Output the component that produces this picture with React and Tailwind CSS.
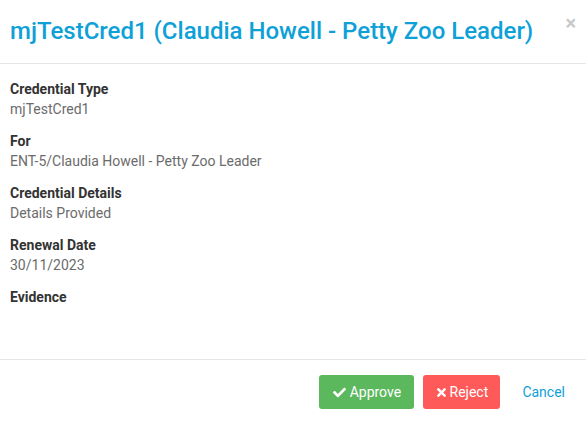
import { FaCheck, FaTimes } from 'react-icons/fa';

const fields = [
  { label: 'Credential Type', value: 'mjTestCred1' },
  { label: 'For', value: 'ENT-5/Claudia Howell - Petty Zoo Leader' },
  { label: 'Credential Details', value: 'Details Provided' },
  { label: 'Renewal Date', value: '30/11/2023' },
  { label: 'Evidence', value: '' },
];

const App = () => {
  return (
    <div className="w-[586px] h-[422px] bg-white font-['Roboto',sans-serif] flex flex-col overflow-hidden">
      {/* Header */}
      <div className="h-[64px] shrink-0 flex items-center justify-between pl-[10px] pr-[10px] border-b border-[#e5e5e5]">
        <h1 className="text-[24px] leading-none font-medium text-[#0ea1d8] -mt-[1px]">
          mjTestCred1 (Claudia Howell - Petty Zoo Leader)
        </h1>
        <button className="self-start mt-[13px] text-[#c8c8c8] text-[20px] leading-none font-bold">×</button>
      </div>

      {/* Body */}
      <div className="h-[295px] shrink-0 px-[10px] pt-[15px]">
        {fields.map((f) => (
          <div key={f.label} className="mb-[12px]">
            <div className="text-[14px] leading-[20px] font-bold text-[#333]">{f.label}</div>
            {f.value && <div className="text-[14px] leading-[20px] text-[#6b6b6b]">{f.value}</div>}
          </div>
        ))}
      </div>

      {/* Footer */}
      <div className="flex-1 border-t border-[#e5e5e5] flex items-start justify-end pt-[15px] pr-[9px]">
        <button className="h-[34px] w-[95px] flex items-center justify-center gap-[4px] bg-[#5cb85c] rounded-[3px] text-white text-[14px]">
          <FaCheck className="w-[13px] h-[13px]" />
          Approve
        </button>
        <button className="ml-[9px] h-[34px] w-[77px] flex items-center justify-center gap-[3px] bg-[#ff5a5a] rounded-[3px] text-white text-[14px]">
          <FaTimes className="w-[11px] h-[13px]" />
          Reject
        </button>
        <button className="h-[34px] px-[12px] ml-[10px] text-[14px] text-[#0ea1d8]">Cancel</button>
      </div>
    </div>
  );
};

export default App;
